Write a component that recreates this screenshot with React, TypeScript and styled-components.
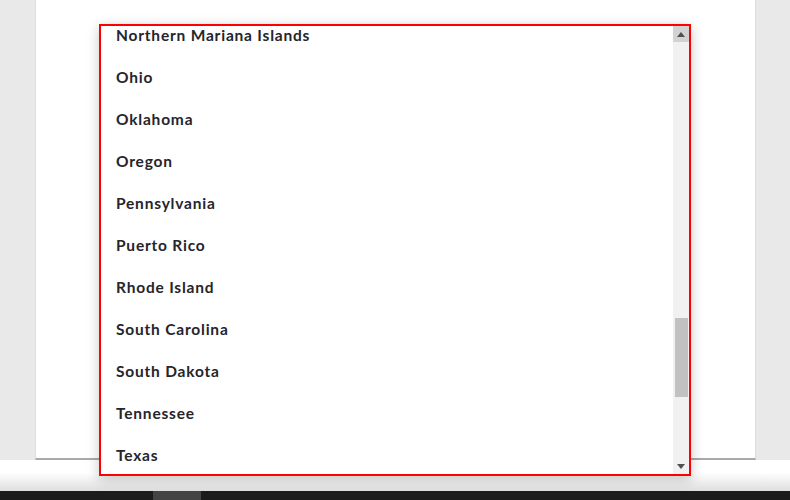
import React from "react";
import styled, { createGlobalStyle } from "styled-components";

const Global = createGlobalStyle`
  html, body { margin: 0; padding: 0; }
  body { background: #e9e9e9; font-family: "Lato", "Liberation Sans", sans-serif; overflow: hidden; }
`;

const Page = styled.div`
  position: relative;
  width: 790px;
  height: 500px;
  display: flex;
  flex-direction: column;
`;

const Main = styled.div`
  height: 460px;
  padding: 0 34px 0 35px;
  display: flex;
`;

const Panel = styled.div`
  flex: 1;
  background: #ffffff;
  border-left: 1px solid #dcdcdc;
  border-right: 1px solid #dcdcdc;
  border-bottom: 2px solid #a9a9a9;
`;

const Footer = styled.div`
  height: 31px;
  background: linear-gradient(#ffffff 0%, #ffffff 40%, #dedede 100%);
`;

const BottomBar = styled.div`
  height: 9px;
  background: #1c1c1c;
  display: flex;
`;

const BarSegment = styled.div`
  margin-left: 153px;
  width: 48px;
  background: #444444;
`;

const Dropdown = styled.div`
  position: absolute;
  left: 99px;
  top: 24px;
  width: 588px;
  height: 448px;
  border: 2px solid #ff0000;
  background: #ffffff;
  box-shadow: 0 3px 12px rgba(0, 0, 0, 0.22);
  display: flex;
  overflow: hidden;
`;

const List = styled.ul`
  flex: 1;
  list-style: none;
  margin: -12px 0 0 0;
  padding: 0;
`;

const Item = styled.li`
  height: 42px;
  display: flex;
  align-items: center;
  padding-left: 15px;
  font-family: "Lato", sans-serif;
  font-weight: 700;
  font-size: 15.5px;
  letter-spacing: 0.8px;
  color: #25252b;
`;

const Scrollbar = styled.div`
  width: 16px;
  background: #f1f1f1;
  display: flex;
  flex-direction: column;
`;

const ArrowButton = styled.div<{ $active?: boolean }>`
  height: 16px;
  background: ${(p) => (p.$active ? "#d2d2d2" : "#f1f1f1")};
  display: flex;
  align-items: center;
  justify-content: center;
`;

const Track = styled.div`
  flex: 1;
  position: relative;
`;

const Thumb = styled.div`
  position: absolute;
  left: 2px;
  right: 1px;
  background: #c1c1c1;
`;

const states = [
  "Northern Mariana Islands",
  "Ohio",
  "Oklahoma",
  "Oregon",
  "Pennsylvania",
  "Puerto Rico",
  "Rhode Island",
  "South Carolina",
  "South Dakota",
  "Tennessee",
  "Texas",
];

export default function App() {
  return (
    <>
      <Global />
      <Page>
        <Main>
          <Panel />
        </Main>
        <Footer />
        <BottomBar>
          <BarSegment />
        </BottomBar>
        <Dropdown>
          <List>
            {states.map((s) => (
              <Item key={s}>{s}</Item>
            ))}
          </List>
          <Scrollbar>
            <ArrowButton $active>
              <svg width="8" height="5" viewBox="0 0 8 5">
                <path d="M4 0 L8 5 L0 5 Z" fill="#505050" />
              </svg>
            </ArrowButton>
            <Track>
              <Thumb style={{ top: 276, height: 79 }} />
            </Track>
            <ArrowButton>
              <svg width="8" height="5" viewBox="0 0 8 5">
                <path d="M0 0 L8 0 L4 5 Z" fill="#505050" />
              </svg>
            </ArrowButton>
          </Scrollbar>
        </Dropdown>
      </Page>
    </>
  );
}
